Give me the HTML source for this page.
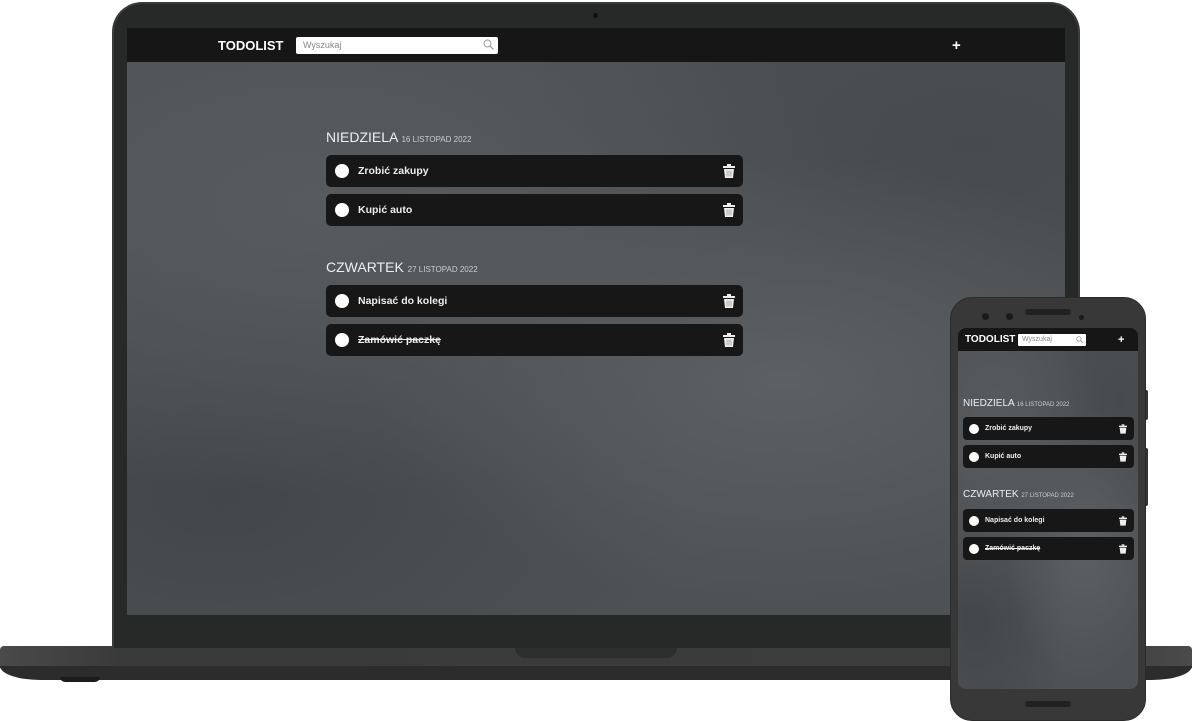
<!DOCTYPE html>
<html><head><meta charset="utf-8"><style>
*{margin:0;padding:0;box-sizing:border-box}
body{width:1192px;height:721px;background:#fff;position:relative;overflow:hidden;font-family:"Liberation Sans",sans-serif}
.a{position:absolute}
.tex{background:radial-gradient(ellipse at 20% 30%,#575b5d 0%,transparent 50%),radial-gradient(ellipse at 70% 60%,#5c6062 0%,transparent 45%),radial-gradient(ellipse at 10% 80%,#43474a 0%,transparent 40%),radial-gradient(ellipse at 90% 20%,#474b4d 0%,transparent 40%),#4e5254}
.item{position:absolute;background:#171717;border-radius:5px}
.dot{position:absolute;background:#fff;border-radius:50%}
.t{position:absolute;color:#eee;font-weight:bold;white-space:nowrap}
.h{position:absolute;color:#eee;white-space:nowrap}
.h small{color:#ccc}
</style></head><body>
<div class="a" style="left:0;top:646px;width:1192px;height:22px;background:linear-gradient(90deg,#4a4a4a,#3a3a3a 10%,#3c3c3c 90%,#4a4a4a);border-radius:4px 4px 0 0"></div>
<div class="a" style="left:0;top:666px;width:1192px;height:14px;background:#2c2c2c;border-radius:0 0 40px 40px/0 0 14px 14px"></div>
<div class="a" style="left:60px;top:677px;width:40px;height:5px;background:#1c1c1c;border-radius:0 0 10px 10px"></div>
<div class="a" style="left:515px;top:646px;width:162px;height:12px;background:#2e2e2e;border-radius:0 0 10px 10px"></div>
<div class="a" style="left:112px;top:2px;width:968px;height:646px;background:#272828;border-radius:30px 30px 0 0;border:2px solid #3a3b3b;border-bottom:none"></div>
<div class="a" style="left:593px;top:13px;width:5px;height:5px;border-radius:50%;background:#111"></div>
<div class="a tex" style="left:127px;top:28px;width:938px;height:587px"></div>
<div class="a" style="left:127px;top:28px;width:938px;height:34px;background:#161616"></div>
<div class="t" style="left:218px;top:38px;font-size:13px;color:#fff">TODOLIST</div>
<div class="a" style="left:296px;top:37px;width:202px;height:17px;background:#fff;border-radius:2px"></div>
<div class="a" style="left:303px;top:40px;font-size:9px;color:#888">Wyszukaj</div>
<svg class="a" style="left:483px;top:39px" width="11" height="11" viewBox="0 0 11 11"><circle cx="4.5" cy="4.5" r="3.5" fill="none" stroke="#999" stroke-width="1"/><path d="M7 7l3.5 3.5" stroke="#999" stroke-width="1.2"/></svg>
<div class="t" style="left:952px;top:37px;font-size:15px;color:#fff">+</div>

<div class="h" style="left:326px;top:129px;font-size:14px">NIEDZIELA <small style="font-size:8px">16 LISTOPAD 2022</small></div>
<div class="h" style="left:326px;top:259px;font-size:14px">CZWARTEK <small style="font-size:8px">27 LISTOPAD 2022</small></div>

<div class="item" style="left:326px;top:155px;width:417px;height:32px"></div>
<div class="item" style="left:326px;top:194px;width:417px;height:32px"></div>
<div class="item" style="left:326px;top:285px;width:417px;height:32px"></div>
<div class="item" style="left:326px;top:324px;width:417px;height:32px"></div>
<div class="dot" style="left:335px;top:164px;width:14px;height:14px"></div>
<div class="dot" style="left:335px;top:203px;width:14px;height:14px"></div>
<div class="dot" style="left:335px;top:294px;width:14px;height:14px"></div>
<div class="dot" style="left:335px;top:333px;width:14px;height:14px"></div>
<div class="t" style="left:358px;top:165px;font-size:10.5px">Zrobić zakupy</div>
<div class="t" style="left:358px;top:204px;font-size:10.5px">Kupić auto</div>
<div class="t" style="left:358px;top:295px;font-size:10.5px">Napisać do kolegi</div>
<div class="t" style="left:358px;top:334px;font-size:10.5px;text-decoration:line-through">Zamówić paczkę</div>
<svg class="a" style="left:723px;top:164px" width="12" height="14" viewBox="0 0 12 14"><rect x="0" y="2" width="12" height="2" fill="#eee"/><rect x="4" y="0" width="4" height="2" fill="#eee"/><path d="M1 5h10l-1 9H2z" fill="#eee"/><path d="M4 6.5v6M6 6.5v6M8 6.5v6" stroke="#999" stroke-width=".8"/></svg>
<svg class="a" style="left:723px;top:203px" width="12" height="14" viewBox="0 0 12 14"><rect x="0" y="2" width="12" height="2" fill="#eee"/><rect x="4" y="0" width="4" height="2" fill="#eee"/><path d="M1 5h10l-1 9H2z" fill="#eee"/><path d="M4 6.5v6M6 6.5v6M8 6.5v6" stroke="#999" stroke-width=".8"/></svg>
<svg class="a" style="left:723px;top:294px" width="12" height="14" viewBox="0 0 12 14"><rect x="0" y="2" width="12" height="2" fill="#eee"/><rect x="4" y="0" width="4" height="2" fill="#eee"/><path d="M1 5h10l-1 9H2z" fill="#eee"/><path d="M4 6.5v6M6 6.5v6M8 6.5v6" stroke="#999" stroke-width=".8"/></svg>
<svg class="a" style="left:723px;top:333px" width="12" height="14" viewBox="0 0 12 14"><rect x="0" y="2" width="12" height="2" fill="#eee"/><rect x="4" y="0" width="4" height="2" fill="#eee"/><path d="M1 5h10l-1 9H2z" fill="#eee"/><path d="M4 6.5v6M6 6.5v6M8 6.5v6" stroke="#999" stroke-width=".8"/></svg>

<div class="a" style="left:1144px;top:390px;width:4px;height:30px;background:#333;border-radius:2px"></div>
<div class="a" style="left:1144px;top:448px;width:4px;height:58px;background:#333;border-radius:2px"></div>
<div class="a" style="left:950px;top:297px;width:196px;height:424px;background:#383838;border-radius:22px;border:1px solid #2a2a2a"></div>
<div class="a" style="left:982px;top:313px;width:7px;height:7px;border-radius:50%;background:#1a1a1a"></div>
<div class="a" style="left:1006px;top:313px;width:7px;height:7px;border-radius:50%;background:#1a1a1a"></div>
<div class="a" style="left:1025px;top:309px;width:46px;height:6px;border-radius:3px;background:#222"></div>
<div class="a" style="left:1079px;top:315px;width:5px;height:5px;border-radius:50%;background:#1a1a1a"></div>
<div class="a" style="left:1025px;top:701px;width:46px;height:6px;border-radius:3px;background:#222"></div>
<div class="a tex" style="left:958px;top:328px;width:180px;height:361px;border-radius:8px"></div>
<div class="a" style="left:958px;top:328px;width:180px;height:23px;background:#161616;border-radius:8px 8px 0 0"></div>
<div class="t" style="left:965px;top:334px;font-size:10px;color:#fff">TODOLIST</div>
<div class="a" style="left:1018px;top:334px;width:68px;height:12px;background:#fff;border-radius:1px"></div>
<div class="a" style="left:1022px;top:336px;font-size:7px;color:#888">Wyszukaj</div>
<svg class="a" style="left:1076px;top:336px" width="7" height="7" viewBox="0 0 11 11"><circle cx="4.5" cy="4.5" r="3.5" fill="none" stroke="#999" stroke-width="1.2"/><path d="M7 7l3.5 3.5" stroke="#999" stroke-width="1.4"/></svg>
<div class="t" style="left:1118px;top:334px;font-size:11px;color:#fff">+</div>
<div class="h" style="left:963px;top:398px;font-size:10px">NIEDZIELA <small style="font-size:6px">16 LISTOPAD 2022</small></div>
<div class="h" style="left:963px;top:489px;font-size:10px">CZWARTEK <small style="font-size:6px">27 LISTOPAD 2022</small></div>
<div class="item" style="left:963px;top:417px;width:171px;height:23px;border-radius:4px"></div>
<div class="item" style="left:963px;top:445px;width:171px;height:23px;border-radius:4px"></div>
<div class="item" style="left:963px;top:509px;width:171px;height:23px;border-radius:4px"></div>
<div class="item" style="left:963px;top:537px;width:171px;height:23px;border-radius:4px"></div>
<div class="dot" style="left:969px;top:424px;width:10px;height:10px"></div>
<div class="dot" style="left:969px;top:452px;width:10px;height:10px"></div>
<div class="dot" style="left:969px;top:516px;width:10px;height:10px"></div>
<div class="dot" style="left:969px;top:544px;width:10px;height:10px"></div>
<div class="t" style="left:985px;top:424px;font-size:7px;line-height:10px">Zrobić zakupy</div>
<div class="t" style="left:985px;top:452px;font-size:7px;line-height:10px">Kupić auto</div>
<div class="t" style="left:985px;top:516px;font-size:7px;line-height:10px">Napisać do kolegi</div>
<div class="t" style="left:985px;top:544px;font-size:7px;line-height:10px;text-decoration:line-through">Zamówić paczkę</div>
<svg class="a" style="left:1119px;top:424px" width="8" height="10" viewBox="0 0 12 14"><rect x="0" y="2" width="12" height="2" fill="#eee"/><rect x="4" y="0" width="4" height="2" fill="#eee"/><path d="M1 5h10l-1 9H2z" fill="#eee"/></svg>
<svg class="a" style="left:1119px;top:452px" width="8" height="10" viewBox="0 0 12 14"><rect x="0" y="2" width="12" height="2" fill="#eee"/><rect x="4" y="0" width="4" height="2" fill="#eee"/><path d="M1 5h10l-1 9H2z" fill="#eee"/></svg>
<svg class="a" style="left:1119px;top:516px" width="8" height="10" viewBox="0 0 12 14"><rect x="0" y="2" width="12" height="2" fill="#eee"/><rect x="4" y="0" width="4" height="2" fill="#eee"/><path d="M1 5h10l-1 9H2z" fill="#eee"/></svg>
<svg class="a" style="left:1119px;top:544px" width="8" height="10" viewBox="0 0 12 14"><rect x="0" y="2" width="12" height="2" fill="#eee"/><rect x="4" y="0" width="4" height="2" fill="#eee"/><path d="M1 5h10l-1 9H2z" fill="#eee"/></svg>
</body></html>
